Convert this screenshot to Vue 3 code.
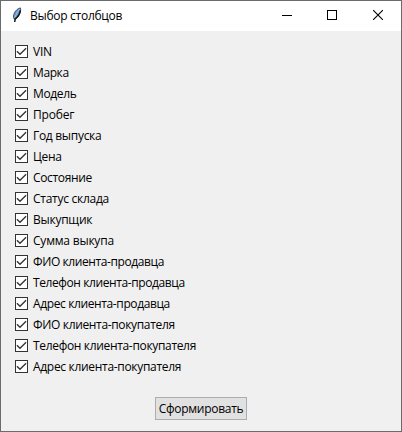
<script setup>
import { ref } from 'vue'

// Each label carries its own tracking, in px.
const columns = ref([
  ['VIN', -0.2],
  ['Марка', -0.4],
  ['Модель', -0.35],
  ['Пробег', -0.2],
  ['Год выпуска', -0.3],
  ['Цена', -0.35],
  ['Состояние', -0.33],
  ['Статус склада', -0.27],
  ['Выкупщик', -0.25],
  ['Сумма выкупа', -0.21],
  ['ФИО клиента-продавца', -0.4],
  ['Телефон клиента-продавца', -0.4],
  ['Адрес клиента-продавца', -0.38],
  ['ФИО клиента-покупателя', -0.34],
  ['Телефон клиента-покупателя', -0.33],
  ['Адрес клиента-покупателя', -0.31],
].map(([label, tracking]) => ({ label, tracking, checked: true })))
</script>

<template>
  <div class="window">
    <header class="titlebar">
      <svg class="feather" width="10" height="16" viewBox="0 0 10 16">
        <path d="M8.4 .9C6 1.2 3.6 3.4 2.3 6.2C1.4 8.2 1.2 9.8 1.8 11.6L3 12.4C5 11.2 6.6 9.4 7.6 7.2C8.5 5.2 8.9 2.6 8.4 .9Z" fill="#6793c8" stroke="#2a394b" stroke-width=".8" />
        <path d="M7.6 2.2C5.6 4.4 4 7.2 2.9 10.6" fill="none" stroke="#a5c6e8" stroke-width="1" />
        <path d="M8.4 3.4C7.8 6.8 5.6 10.2 3.2 11.8L2.7 15" fill="none" stroke="#101820" stroke-width="1.5" />
      </svg>
      <h1 class="title">Выбор столбцов</h1>
      <div class="controls">
        <svg class="minimize" width="10" height="10" viewBox="0 0 10 10" shape-rendering="crispEdges"><path d="M0 5.5H10" stroke="#000" /></svg>
        <svg width="10" height="10" viewBox="0 0 10 10" shape-rendering="crispEdges"><path d="M.5 .5H9.5V9.5H.5Z" fill="none" stroke="#000" /></svg>
        <svg width="10" height="10" viewBox="0 0 10 10"><path d="M0 0L10 10M10 0L0 10" stroke="#000" stroke-width="1.1" /></svg>
      </div>
    </header>
    <main class="content">
      <div class="list">
        <div v-for="c in columns" :key="c.label" class="row" @click="c.checked = !c.checked">
          <span class="box">
            <svg v-if="c.checked" width="11" height="11" viewBox="0 0 11 11"><path d="M.9 5.2L4 8.3L10.1 2.2" fill="none" stroke="#333" stroke-width="1.3" /></svg>
          </span>
          <span class="label" :style="{ letterSpacing: c.tracking + 'px' }">{{ c.label }}</span>
        </div>
      </div>
      <button class="submit">Сформировать</button>
    </main>
  </div>
</template>

<style>
body {
  margin: 0;
}
</style>

<style scoped>
.window {
  box-sizing: border-box;
  width: 402px;
  height: 432px;
  display: flex;
  flex-direction: column;
  border: 1px solid #6b6b6b;
  background: #f0f0f0;
  color: #000;
  font: 12px/16px "Open Sans", "Noto Sans", sans-serif;
}
.titlebar {
  display: flex;
  align-items: center;
  height: 30px;
  flex: none;
  background: #fff;
  padding: 0 18px 0 11px;
}
.feather {
  display: block;
  margin-bottom: 2px;
}
.title {
  margin: 0 0 0 8px;
  font-size: 12px;
  font-weight: 400;
  letter-spacing: -0.28px;
  white-space: nowrap;
}
.controls {
  display: flex;
  gap: 36px;
  margin: 0 0 2px auto;
}
.controls svg {
  display: block;
}
.controls .minimize {
  margin-right: -1px;
}
.content {
  flex: 1;
  display: flex;
  flex-direction: column;
  padding: 10px 14px 11px;
}
.row {
  display: flex;
  align-items: center;
  height: 21px;
}
.box {
  box-sizing: border-box;
  width: 13px;
  height: 13px;
  flex: none;
  border: 1px solid #333;
  background: #fff;
}
.box svg {
  display: block;
}
.label {
  margin-left: 5px;
  white-space: nowrap;
}
.submit {
  box-sizing: border-box;
  width: 92px;
  height: 23px;
  margin: auto auto 0;
  padding: 0;
  border: 1px solid #adadad;
  background: #e1e1e1;
  color: #000;
  font: inherit;
  letter-spacing: -0.28px;
  white-space: nowrap;
}
</style>
